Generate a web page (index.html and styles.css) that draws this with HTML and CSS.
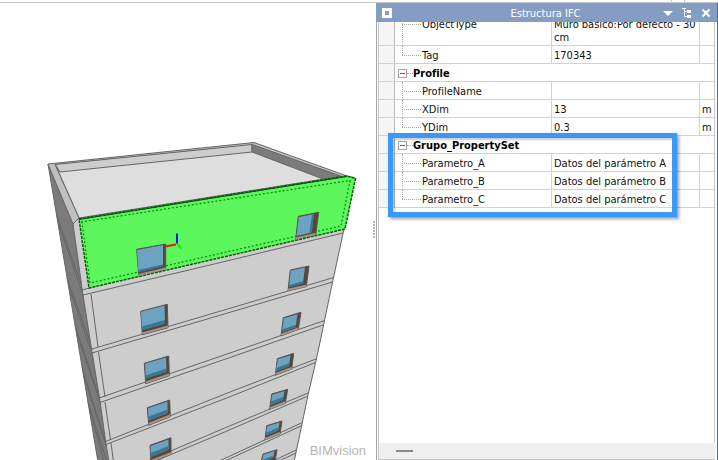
FILE: index.html
```html
<!DOCTYPE html>
<html lang="es">
<head>
<meta charset="utf-8">
<title>BIMvision</title>
<link rel="stylesheet" href="styles.css">
</head>
<body>
<div class="toolbar-edge"></div>
<main class="workspace">
  <section class="viewport">
    <svg class="model" viewBox="0 3 376 457" preserveAspectRatio="xMinYMin slice" aria-hidden="true">
      <!-- side wall -->
      <path class="side" d="M48 164L73 224L83 295L92 352L100 401L106 444L109 462H98Z"/>
      <path class="seam" d="M57 216L83 289M58.500 224L83 295M67 278L92 347M68.500 286L92 353M75 325L99 397M76.500 333L100 402M82 367L105 441M83.500 375L106 445M88 402L107 462M90 410L104 462"/>
      <!-- front wall -->
      <path class="wall" d="M73 224L79 218L347 176L355 178L344 229L333 280L324 323L316 361L308 395L302 424L294 462H109L106 444L100 401L92 352L83 295Z"/>
      <!-- roof and parapet -->
      <path class="roof" d="M55 164L252 144L343 176L79 218Z"/>
      <path class="wall" d="M55 164L252 144V152L60 172Z"/>
      <path class="side" d="M252 144L343 176L323 179L252 152Z"/>
      <path class="coping" d="M48 164L254 142.500L347 176L342 176.500L252 144.500L55 164.500L79 218L73 224Z"/>
      <path class="line" d="M82.500 290L89 288M83 295L210 265L343 233M91 294L98 347M98.500 352L105 397M105 402L110.500 440M111 443L113.500 462"/>
      <path class="line" d="M92 349L230 308.300L333 277.700M92 353L230 312.300L332.500 282M99 398L230 353L324 320.700M100 402.500L230 357.500L323 325M105 441.700L230 392L316 359M106 444.500L230 396.700L315 362.700M145 462L220 430L308 393M153 462L220 434L308 396M217 462L302 422.700M223 462L302 425.500M271 462L296 450M277 462L296 453"/>
      <!-- selected wall -->
      <path class="selected" d="M79 219L347 176L355.500 178.500L345 229L89 288Z"/>
      <path class="selected-edge" d="M79 219L347 176L355.500 178.500L345 229L89 288Z"/>
      <path class="selected-top" d="M79 219.500L347 176.500"/>
      <path class="hidden-edge" d="M81 222L350 180.500L341 226L90 283L82 222"/>
      <!-- windows: frame, glass, lower pane, sill -->
      <g class="windows">
        <path class="frame" d="M136.700 249.300L165.700 244V269.300L138.700 275.700Z"/>
        <path class="glass" d="M137 250L163 245V266L138.500 272Z"/>
        <path class="pane" d="M138.200 270L163 264.500V266.500L138.500 272Z"/>
        <path class="sill" d="M138.500 275L166 268.500"/>

        <path class="frame" d="M140.700 311.300L167.300 304.300L168 327.700L142.300 334.700Z"/>
        <path class="glass" d="M141 311.800L164.500 305.500L165 323.500L142 330Z"/>
        <path class="pane" d="M141.800 326.500L165 320V323.500L142 330Z"/>
        <path class="sill" d="M142.300 333.500L168 326.500"/>

        <path class="frame" d="M144.300 363.300L168.700 356L169.300 375.700L145.700 383.700Z"/>
        <path class="glass" d="M145 363.800L166 357.500L166.500 371.500L145.800 378.500Z"/>
        <path class="pane" d="M145.500 375.500L166.300 368.500L166.500 371.500L145.800 378.500Z"/>
        <path class="sill" d="M145.800 382.500L169.300 374.500"/>

        <path class="frame" d="M147.300 407.700L169.700 400L170.300 416.700L148.700 425.300Z"/>
        <path class="glass" d="M148 408.200L167.500 401.500V413L148.700 420.500Z"/>
        <path class="pane" d="M148.500 416.500L167.500 409.500V413L148.700 420.500Z"/>
        <path class="sill" d="M148.700 424L170.300 415.500"/>

        <path class="frame" d="M150 445.300L171 437.700V454L151 462Z"/>
        <path class="glass" d="M150.500 446L168.500 439.500V449.500L151 457Z"/>
        <path class="pane" d="M150.800 453L168.500 446V449.500L151 457Z"/>
        <path class="sill" d="M151 461L171.500 453"/>

        <path class="frame" d="M298.300 216.300L318.700 212.300L315.700 235L295.700 239.300Z"/>
        <path class="glass" d="M298.800 217L314 214L311.500 232.500L296.500 236Z"/>
        <path class="pane" d="M314 214L311.500 232.500L309.500 233L312 214.500Z"/>
        <path class="sill" d="M295.700 238.500L315.500 234"/>

        <path class="frame" d="M290.300 270L309 266L306.300 286.700L288 290.700Z"/>
        <path class="glass" d="M290.800 270.600L305 267.500L303 283L289 287Z"/>
        <path class="pane" d="M289.300 285L303.500 281L303 283.500L289 287.300Z"/>
        <path class="sill" d="M288 289.800L306.300 285.700"/>

        <path class="frame" d="M283.300 317.700L301 312.300L298.300 329.300L281 336Z"/>
        <path class="glass" d="M283.800 318.300L297.500 314.200L295.700 327L282 332Z"/>
        <path class="pane" d="M282.300 329.500L296 324.700L295.700 327L282 332Z"/>
        <path class="sill" d="M281.200 334.800L298.300 328.500"/>

        <path class="frame" d="M277.300 358.700L293.700 353.300L291.700 369L275.300 375.300Z"/>
        <path class="glass" d="M277.800 359.300L290.500 355.200L289 366L276 371Z"/>
        <path class="pane" d="M276.500 368L289.500 363L289 366L276 371Z"/>
        <path class="sill" d="M275.500 374L291.700 368"/>

        <path class="frame" d="M271.700 394L287.700 389.300L285.300 403.300L269.700 409.300Z"/>
        <path class="glass" d="M272.200 394.700L284.500 391L283 400L270.700 405Z"/>
        <path class="pane" d="M271.200 401.500L283.500 396.700L283 400L270.700 405Z"/>
        <path class="sill" d="M270 408.200L285.300 402.200"/>

        <path class="frame" d="M266.700 425.700L282 421L280 434L265 440Z"/>
        <path class="glass" d="M267.200 426.300L279.500 422.500L278 430.500L265.900 435.500Z"/>
        <path class="pane" d="M266.300 432.500L278.700 427.500L278 430.500L265.900 435.500Z"/>
        <path class="sill" d="M265.200 439L280 433"/>

        <path class="frame" d="M263 454L277 449.700L275 462H261Z"/>
        <path class="glass" d="M263.400 454.600L274.500 451L273.500 457.500L262 462Z"/>
        <path class="pane" d="M262.500 460L273.800 455.500L273.500 457.500L262 462Z"/>
      </g>
      <!-- local axes -->
      <path class="axis-x" d="M165.500 246.500L176 244.500"/>
      <path class="axis-y" d="M177.500 244.500L181.500 248.500"/>
      <path class="axis-z" d="M177 233.500V243.500"/>
    </svg>
    <span class="watermark">BIMvision</span>
    <span class="grip"></span>
  </section>

  <aside class="panel">
    <header class="titlebar">
      <span class="dock-mark"></span>
      <h1 class="title">Estructura IFC</h1>
      <div class="actions">
        <button class="action" aria-label="Menú"><svg width="10" height="12" viewBox="0 0 10 12"><path d="M0 4H10L5 9Z" fill="#fff"/></svg></button>
        <button class="action" aria-label="Árbol"><svg width="10" height="12" viewBox="0 0 10 12"><path d="M0 1.500H4M2.500 1V9.500H5M2.500 4.500H5" fill="none" stroke="#fff"/><path d="M5 3H9V6H5ZM5 8H9V11H5Z" fill="#fff"/></svg></button>
        <button class="action" aria-label="Cerrar"><svg width="10" height="12" viewBox="0 0 10 12"><path d="M1.500 2.500L8.500 9.500M8.500 2.500L1.500 9.500" fill="none" stroke="#fff" stroke-width="2"/></svg></button>
      </div>
    </header>
    <div class="content">
      <div class="scroller">
        <table class="properties">
          <colgroup><col class="col-gutter"><col><col class="col-value"><col class="col-unit"></colgroup>
          <tbody>
            <tr class="tall"><td class="gutter"></td><th class="name" scope="row">ObjectType</th><td class="value">Muro básico:Por defecto - 30 cm</td><td class="unit"></td></tr>
            <tr><td class="gutter"></td><th class="name last" scope="row">Tag</th><td class="value">170343</td><td class="unit"></td></tr>
            <tr><td class="gutter"></td><th class="group" colspan="3"><div class="group-label"><button class="toggle" aria-label="Contraer Profile"></button><span>Profile</span></div></th></tr>
            <tr><td class="gutter"></td><th class="name" scope="row">ProfileName</th><td class="value"></td><td class="unit"></td></tr>
            <tr><td class="gutter"></td><th class="name" scope="row">XDim</th><td class="value">13</td><td class="unit">m</td></tr>
            <tr><td class="gutter"></td><th class="name last" scope="row">YDim</th><td class="value">0.3</td><td class="unit">m</td></tr>
            <tr><td class="gutter"></td><th class="group" colspan="3"><div class="group-label"><button class="toggle" aria-label="Contraer Grupo_PropertySet"></button><span>Grupo_PropertySet</span></div></th></tr>
            <tr><td class="gutter"></td><th class="name" scope="row">Parametro_A</th><td class="value">Datos del parámetro A</td><td class="unit"></td></tr>
            <tr><td class="gutter"></td><th class="name" scope="row">Parametro_B</th><td class="value">Datos del parámetro B</td><td class="unit"></td></tr>
            <tr><td class="gutter"></td><th class="name last" scope="row">Parametro_C</th><td class="value">Datos del parámetro C</td><td class="unit"></td></tr>
          </tbody>
        </table>
      </div>
      <footer class="statusbar"><span class="handle"></span></footer>
      <div class="highlight"></div>
    </div>
  </aside>
</main>
</body>
</html>
```
FILE: styles.css
```css
* { box-sizing: border-box; }

body {
  margin: 0;
  height: 100vh;
  display: flex;
  flex-direction: column;
  overflow: hidden;
  background: #fff;
  color: #111;
  font: 11px/13px "DejaVu Sans Condensed", "DejaVu Sans", sans-serif;
}

button { padding: 0; border: 0; background: none; }

.toolbar-edge {
  height: 3px;
  flex: none;
  border-bottom: 1px solid #c6c8ca;
  background: linear-gradient(#c6c8ca, #c6c8ca) right 46px top / 1px 100% no-repeat,
    linear-gradient(#c6c8ca, #c6c8ca) right 33px top / 1px 100% no-repeat;
}

.workspace {
  flex: 1;
  min-height: 0;
  display: grid;
  grid-template-columns: 376fr 342fr;
}

/* 3D view */
.viewport { position: relative; overflow: hidden; min-width: 0; }
.model { display: block; width: 100%; height: 100%; }
.wall, .side, .roof, .coping { stroke: #666; stroke-width: 1; stroke-linejoin: round; }
.wall { fill: #cdcdcd; }
.coping { fill: #c0c0c0; }
.side { fill: #7b7b7b; }
.roof { fill: #dedede; }
.line, .seam { fill: none; stroke: #666; stroke-width: 1; }
.selected { fill: #5cf75c; }
.selected-edge { fill: none; stroke: #075c07; stroke-width: 1.5; stroke-dasharray: 3 1; }
.selected-top { stroke: #0a540a; stroke-width: 1; }
.hidden-edge { fill: none; stroke: #0c850c; stroke-width: 1.2; stroke-dasharray: 2 2; }
.frame { fill: #5a4638; stroke: #555; stroke-width: 1; }
.glass { fill: #6ba3c0; }
.pane { fill: #357995; }
.sill { fill: none; stroke: #a3958c; stroke-width: 2; }
.axis-x, .axis-y, .axis-z { fill: none; stroke-width: 2; }
.axis-x { stroke: #e51c0c; }
.axis-y { stroke: #12e512; }
.axis-z { stroke: #1717d8; }

.watermark {
  position: absolute;
  right: 10px;
  bottom: 2px;
  color: #b4b4b4;
  font: 13px/15px "Liberation Sans", Arial, sans-serif;
}

.grip {
  position: absolute;
  right: 1px;
  top: 218px;
  width: 2px;
  height: 18px;
  background: repeating-linear-gradient(#b5b5b5 0 2px, #fff 2px 3px);
}

/* Property panel */
.panel {
  min-width: 0;
  display: flex;
  flex-direction: column;
  border-right: 1px solid #4b6b9d;
}

.titlebar {
  height: 19px;
  flex: none;
  display: flex;
  align-items: center;
  padding: 0 6px;
  background: #849dc2;
  color: #fff;
}

.dock-mark { width: 10px; height: 10px; border: 3px solid #fff; }
.title { flex: 1; margin: 0; padding: 1px 0 0 36px; text-align: center; font-size: 11px; font-weight: 400; }
.actions { display: flex; gap: 9px; }
.action { display: flex; }

.content {
  position: relative;
  flex: 1;
  min-height: 0;
  display: flex;
  flex-direction: column;
  margin-left: 2px;
  padding: 0 2px 1px 0;
}
.content::before {
  content: "";
  position: absolute;
  inset: 0 auto 0 -2px;
  border-left: 1px solid #a3a3a3;
}

.scroller {
  flex: 1;
  min-height: 0;
  overflow: hidden;
  display: flex;
  align-items: flex-start;
  border-left: 1px solid #c2c2c2;
  border-right: 1px solid #c6c6c6;
}

.properties {
  width: 100%;
  margin-top: -11px;
  table-layout: fixed;
  border-collapse: separate;
  border-spacing: 0;
}
.col-gutter { width: 16px; }
.col-value { width: 148px; }
.col-unit { width: 14px; }

.properties tr { height: 18px; }
.properties td, .properties th {
  height: 18px;
  padding: 0;
  border-bottom: 1px solid #d2d2d2;
  font-weight: 400;
  text-align: left;
  vertical-align: top;
}
.properties .gutter { background: #f5f5f5; border-right: 1px solid #bbb; }
.properties .name { position: relative; padding: 3px 0 0 27px; border-right: 1px solid #d2d2d2; }
.properties .value { padding: 3px 0 0 2px; border-right: 1px solid #d2d2d2; }
.properties .unit { padding: 3px 0 0 2px; }
.properties .tall .name, .properties .tall .value { height: 35px; padding-top: 7px; }

.name::before, .name::after { content: ""; position: absolute; left: 7px; }
.name::before { top: 0; bottom: -1px; border-left: 1px dotted #aaa; }
.name.last::before { bottom: 8px; }
.name::after { top: 9px; width: 19px; border-top: 1px dotted #aaa; }
.tall .name::after { top: 13px; }

.properties .group { font-weight: 700; vertical-align: middle; }
.group-label { display: flex; align-items: center; padding: 1px 0 0 3px; color: #000; }
.group-label::before { order: 1; content: ""; width: 6px; border-top: 1px dotted #aaa; }
.group-label span { order: 2; }
.toggle {
  width: 9px;
  height: 9px;
  border: 1px solid #a5a5a5;
  background: linear-gradient(#666, #666) center / 5px 1px no-repeat;
}

.statusbar {
  height: 16px;
  flex: none;
  display: flex;
  align-items: center;
  padding-left: 17px;
  border-left: 1px solid #c2c2c2;
  background: #efefef;
  box-shadow: 0 1px #c6c6c6;
}
.handle { width: 17px; height: 2px; background: #888; }

/* Callout around the property set */
.highlight {
  position: absolute;
  top: 111px;
  left: 10px;
  right: 40px;
  height: 84px;
  border: 5px solid #3998f8;
  box-shadow: 2px 2px 3px rgba(0, 0, 0, .4), inset 2px 2px 2px rgba(0, 0, 0, .2);
}
```
